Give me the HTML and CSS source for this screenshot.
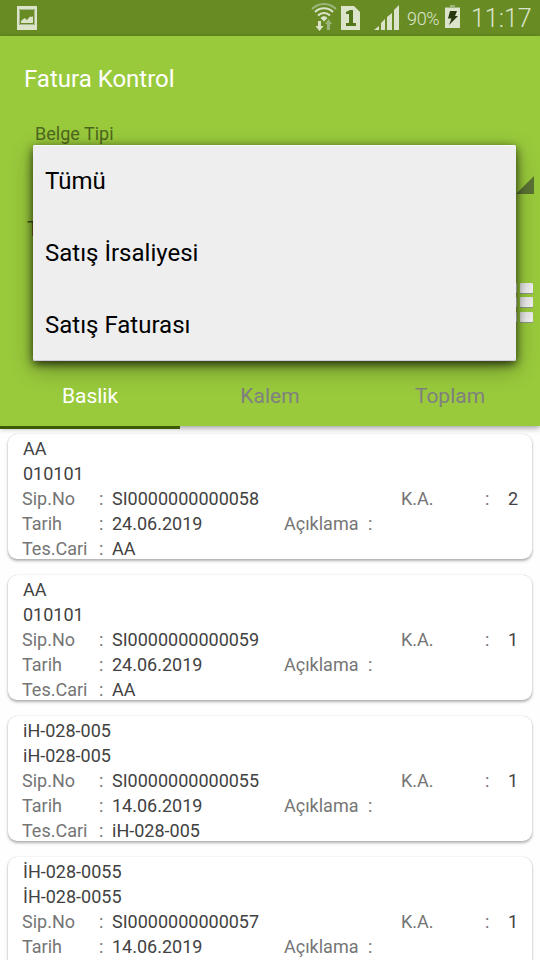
FILE: index.html
```html
<!DOCTYPE html>
<html lang="tr">
<head>
<meta charset="utf-8">
<title>Fatura Kontrol</title>
<link rel="stylesheet" href="styles.css">
</head>
<body>
<div class="screen">
  <div class="status">
    <svg class="status-photo" width="20" height="24" viewBox="0 0 20 24"><path fill="#dbe4cb" fill-rule="evenodd" d="M0 0h20v24H0zM2 3v16h16V3z"/><path fill="none" stroke="#a5b98a" stroke-width="1" d="M2.500 3.500h15v15h-15z"/><path fill="#dbe4cb" d="M4 17v-2l3.500-3 2.500 2 3-3.500 2 .5 1-1v7z"/></svg>
    <div class="status-right">
      <svg class="wifi" width="26" height="28" viewBox="0 0 26 28"><g fill="none" stroke="#dbe4cb" stroke-width="2"><path stroke="#9db57a" d="M1 6C8-.7 18-.7 25 6"/><path d="M4 9c5-5 13-5 18 0M7 12.500c3.500-3.500 8.500-3.500 12 0"/></g><path fill="#dbe4cb" d="M9.500 15c2-2.500 5-2.500 7 0L13 18.500zM7 18h3v5h2.500l-4 5-4-5H7z"/><path fill="#9db57a" d="M17.500 16l3.500 5h-2v6h-3v-6h-2z"/></svg>
      <svg class="sim" width="19" height="24" viewBox="0 0 19 24"><path fill="#dbe4cb" d="M0 0h13l6 6v18H0z"/><path fill="#54761a" d="M9 4h3v13h3v3H5v-3h3V8H5V6z"/></svg>
      <svg class="signal" width="26" height="26" viewBox="0 0 26 26"><path fill="#dbe4cb" d="M0 26l5-4v4zM7 26v-7l4-4v11zM13 26V13l5-4v17zM20 26V6l5-5v25z"/></svg>
      <span class="percent">90%</span>
      <svg class="battery" width="15" height="23" viewBox="0 0 15 23"><path fill="#9db57a" d="M5 0h5v2h5v2H0V2h5z"/><path fill="#dbe4cb" d="M0 3h15v20H0z"/><path fill="#29370e" d="M5 6h7l-2 5h3L4 20l2.500-6.500H3z"/></svg>
      <span class="clock">11:17</span>
    </div>
  </div>
  <header class="header">
    <h1>Fatura Kontrol</h1>
    <div class="filters">
      <div class="filter-label">Belge Tipi</div>
      <div class="filter-row spinner-row"><svg width="18" height="18" viewBox="0 0 18 18"><path fill="#5b7335" d="M18 0v18H0z"/></svg></div>
      <div class="date-label">Tarih</div>
      <div class="filter-row grid-row"><svg width="31" height="42" viewBox="0 0 31 42"><defs><linearGradient id="tile" x2="1" y2="1"><stop stop-color="#e4e4e4"/><stop offset="1" stop-color="#f4f4f4"/></linearGradient></defs><g fill="#8d9a86"><rect x="2" y="1" width="13" height="11" rx="1"/><rect x="18" y="1" width="13" height="11" rx="1"/><rect x="2" y="15" width="13" height="11" rx="1"/><rect x="18" y="15" width="13" height="11" rx="1"/><rect x="2" y="30" width="13" height="11" rx="1"/><rect x="18" y="30" width="13" height="11" rx="1"/></g><g fill="url(#tile)"><rect x="2" y="1" width="13" height="10" rx="1"/><rect x="18" y="1" width="13" height="10" rx="1"/><rect x="2" y="15" width="13" height="10" rx="1"/><rect x="18" y="15" width="13" height="10" rx="1"/><rect x="2" y="30" width="13" height="10" rx="1"/><rect x="18" y="30" width="13" height="10" rx="1"/></g></svg></div>
    </div>
    <nav class="tabs">
      <div class="tab active">Baslik</div>
      <div class="tab">Kalem</div>
      <div class="tab">Toplam</div>
    </nav>
  </header>
  <main class="list">
    <article class="card">
      <div class="name">AA</div><div class="name">010101</div>
      <div class="row order"><span>Sip.No</span><span>:</span><b>SI0000000000058</b><span>K.A.</span><span>:</span><b>2</b></div>
      <div class="row date"><span>Tarih</span><span>:</span><b>24.06.2019</b><span>Açıklama</span><span>:</span></div>
      <div class="row"><span>Tes.Cari</span><span>:</span><b>AA</b></div>
    </article>
    <article class="card">
      <div class="name">AA</div><div class="name">010101</div>
      <div class="row order"><span>Sip.No</span><span>:</span><b>SI0000000000059</b><span>K.A.</span><span>:</span><b>1</b></div>
      <div class="row date"><span>Tarih</span><span>:</span><b>24.06.2019</b><span>Açıklama</span><span>:</span></div>
      <div class="row"><span>Tes.Cari</span><span>:</span><b>AA</b></div>
    </article>
    <article class="card">
      <div class="name">iH-028-005</div><div class="name">iH-028-005</div>
      <div class="row order"><span>Sip.No</span><span>:</span><b>SI0000000000055</b><span>K.A.</span><span>:</span><b>1</b></div>
      <div class="row date"><span>Tarih</span><span>:</span><b>14.06.2019</b><span>Açıklama</span><span>:</span></div>
      <div class="row"><span>Tes.Cari</span><span>:</span><b>iH-028-005</b></div>
    </article>
    <article class="card">
      <div class="name">İH-028-0055</div><div class="name">İH-028-0055</div>
      <div class="row order"><span>Sip.No</span><span>:</span><b>SI0000000000057</b><span>K.A.</span><span>:</span><b>1</b></div>
      <div class="row date"><span>Tarih</span><span>:</span><b>14.06.2019</b><span>Açıklama</span><span>:</span></div>
    </article>
  </main>
  <div class="popup">
    <div class="option">Tümü</div>
    <div class="option">Satış İrsaliyesi</div>
    <div class="option">Satış Faturası</div>
  </div>
</div>
</body>
</html>
```
FILE: styles.css
```css
* { box-sizing: border-box; }
body { margin: 0; font-family: Roboto, sans-serif; }
.screen { position: relative; width: 540px; height: 960px; overflow: hidden; background: #fefefe; display: flex; flex-direction: column; }
.status { height: 36px; flex: none; background: #688c23; display: flex; justify-content: space-between; padding: 6px 12px 0 17px; color: #dbe4cb; }
.status-right { display: flex; }
.wifi { margin: -3px 4px 0 0; }
.sim { margin-right: 14px; }
.signal { margin: -2px 7px 0 0; }
.percent { width: 33px; margin-right: 5px; font-size: 18px; line-height: 26px; font-weight: 300; letter-spacing: -0.3px; white-space: nowrap; }
.battery { margin: -1px 11px 0 0; }
.clock { width: 57px; font-size: 25px; line-height: 26px; font-weight: 300; white-space: nowrap; }
.header { position: relative; z-index: 1; height: 390px; flex: none; background: #99ca3c; box-shadow: 0 2px 6px rgba(0,0,0,.38); display: flex; flex-direction: column; }
h1 { margin: 0; padding: 29px 24px 0; font-size: 24px; line-height: 28px; font-weight: 400; color: #fff; }
.filters { flex: 1; padding: 30px 6px 0 27px; }
.filter-label { padding-left: 8px; font-size: 18px; line-height: 21px; color: #4e671e; }
.filter-row { display: flex; justify-content: flex-end; }
.spinner-row { height: 73px; padding-top: 32px; }
.date-label { font-size: 21px; line-height: 24px; color: #3d5118; }
.grid-row { padding: 65px 1px 0 0; padding-top: 65px; margin-top: -24px; }
.tabs { height: 60px; display: grid; grid-template-columns: repeat(3, 1fr); }
.tab { text-align: center; font-size: 21px; line-height: 60px; color: #808080; }
.tab.active { color: #fff; border-bottom: 3px solid #3d5a05; }
.list { padding: 8px 8px 0; display: flex; flex-direction: column; gap: 16px; }
.card { height: 125px; flex: none; padding: 2px 14px 0; border-radius: 9px; background: #fff; box-shadow: 0 2px 3px rgba(0,0,0,.3), 0 0 1px rgba(0,0,0,.25); font-size: 18px; line-height: 25px; color: #424242; white-space: nowrap; }
.name { padding-left: 1px; }
.row { display: grid; grid-template-columns: 77px 13px 172px 84px 1fr; color: #757575; }
.order { grid-template-columns: 77px 13px 289px 84px 1fr auto; }
.row b { font-weight: 400; color: #424242; }
.popup { position: absolute; z-index: 2; left: 33px; top: 145px; width: 483px; height: 216px; border-radius: 2px; background: #eee; box-shadow: 0 8px 24px rgba(0,0,0,.3), 0 3px 10px rgba(0,0,0,.72), inset 0 1px #fafafa, inset 0 -1px #d2cbd7; }
.option { height: 72px; padding-left: 12px; font-size: 24px; line-height: 73px; color: #000; }
```
